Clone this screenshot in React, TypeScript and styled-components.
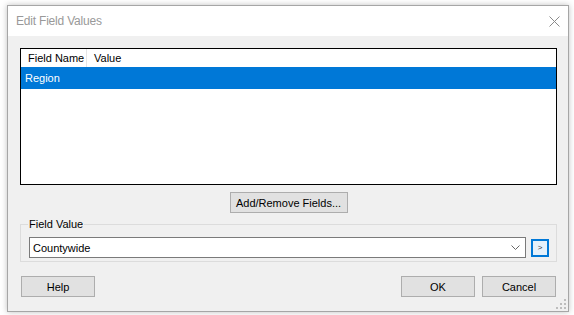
import React from 'react';
import styled, { createGlobalStyle } from 'styled-components';

const GlobalStyle = createGlobalStyle`
  html, body {
    margin: 0;
    padding: 0;
    background: #ffffff;
  }
  body {
    font-family: "Liberation Sans", Arial, sans-serif;
    font-size: 11px;
    color: #000;
  }
`;

const Page = styled.div`
  width: 574px;
  height: 315px;
  padding: 5px 5px 3px 7px;
  box-sizing: border-box;
`;

const Window = styled.div`
  width: 562px;
  height: 307px;
  box-sizing: border-box;
  border: 1px solid #a6a6a6;
  background: #f0f0f0;
  box-shadow: 0 0 6px rgba(0, 0, 0, 0.25);
  display: flex;
  flex-direction: column;
  position: relative;
`;

const TitleBar = styled.div`
  height: 30px;
  flex: none;
  background: #fff;
  display: flex;
  align-items: center;
  justify-content: space-between;
  padding: 0 8px 0 8px;
`;

const Title = styled.span`
  font-family: "Liberation Sans", Arial, sans-serif;
  font-size: 12px;
  color: #999999;
  letter-spacing: -0.2px;
`;

const CloseIcon = styled.svg`
  width: 11px;
  height: 11px;
`;

const Body = styled.div`
  flex: 1;
  display: flex;
  flex-direction: column;
  padding: 12px 11px 13px 12px;
`;

const List = styled.div`
  height: 137px;
  box-sizing: border-box;
  border: 1px solid #000;
  background: #fff;
  flex: none;
`;

const HeaderRow = styled.div`
  display: flex;
  height: 18px;
`;

const HeaderCell = styled.div<{ $w?: number }>`
  width: ${p => (p.$w ? `${p.$w}px` : 'auto')};
  flex: ${p => (p.$w ? 'none' : '1')};
  box-sizing: border-box;
  padding-left: 7px;
  line-height: 18px;
  border-right: ${p => (p.$w ? '1px solid #e5e5e5' : 'none')};
`;

const Row = styled.div<{ $selected?: boolean }>`
  height: 22px;
  line-height: 22px;
  padding-left: 4px;
  background: ${p => (p.$selected ? '#0078d7' : 'transparent')};
  color: ${p => (p.$selected ? '#fff' : '#000')};
`;

const Button = styled.button<{ $w: number }>`
  width: ${p => p.$w}px;
  height: 21px;
  box-sizing: border-box;
  border: 1px solid #adadad;
  background: #e1e1e1;
  font-family: "Liberation Sans", Arial, sans-serif;
  font-size: 11px;
  font-weight: 400;
  color: #000;
  padding: 0;
  flex: none;
`;

const CenterRow = styled.div`
  display: flex;
  justify-content: center;
  margin-top: 7px;
`;

const Group = styled.fieldset`
  margin: 5px 0 0 0;
  border: 1px solid #dcdcdc;
  padding: 6px 7px 3px 8px;
  display: flex;
  align-items: center;
  gap: 5px;
  min-width: 0;
`;

const Legend = styled.legend`
  padding: 0 1px;
  margin-left: -1px;
  line-height: 13px;
  font-size: 11px;
`;

const Combo = styled.div`
  flex: 1;
  height: 21px;
  box-sizing: border-box;
  border: 1px solid #7a7a7a;
  background: #fff;
  display: flex;
  align-items: center;
  justify-content: space-between;
  padding: 0 5px 0 3px;
`;

const Chevron = styled.svg`
  width: 9px;
  height: 5px;
`;

const ArrowButton = styled.button`
  width: 18px;
  height: 18px;
  box-sizing: border-box;
  border: 2px solid #0078d7;
  background: #e5f1fb;
  padding: 0;
  display: flex;
  align-items: center;
  justify-content: center;
  font-family: "Liberation Sans", Arial, sans-serif;
  font-size: 8px;
  color: #333;
  flex: none;
`;

const Footer = styled.div`
  display: flex;
  margin-top: 14px;
  padding: 0 1px;
  gap: 7px;
`;

const Spacer = styled.div`
  flex: 1;
`;

const Grip = styled.svg`
  position: absolute;
  right: 1px;
  bottom: 1px;
  width: 11px;
  height: 11px;
`;

export default function App() {
  return (
    <Page>
      <GlobalStyle />
      <Window>
        <TitleBar>
          <Title>Edit Field Values</Title>
          <CloseIcon viewBox="0 0 11 11">
            <path d="M0.5 0.5 L10.5 10.5 M10.5 0.5 L0.5 10.5" stroke="#8a8a8a" strokeWidth="1" fill="none" />
          </CloseIcon>
        </TitleBar>
        <Body>
          <List>
            <HeaderRow>
              <HeaderCell $w={66}>Field Name</HeaderCell>
              <HeaderCell>Value</HeaderCell>
            </HeaderRow>
            <Row $selected>Region</Row>
          </List>
          <CenterRow>
            <Button $w={118}>Add/Remove Fields...</Button>
          </CenterRow>
          <Group>
            <Legend>Field Value</Legend>
            <Combo>
              <span>Countywide</span>
              <Chevron viewBox="0 0 9 5">
                <path d="M0.5 0.5 L4.5 4.5 L8.5 0.5" stroke="#666" strokeWidth="1" fill="none" />
              </Chevron>
            </Combo>
            <ArrowButton>&gt;</ArrowButton>
          </Group>
          <Footer>
            <Button $w={74}>Help</Button>
            <Spacer />
            <Button $w={74}>OK</Button>
            <Button $w={74}>Cancel</Button>
          </Footer>
        </Body>
        <Grip viewBox="0 0 11 11">
          <rect x="8" y="0" width="2" height="2" fill="#bdbdbd" />
          <rect x="4" y="4" width="2" height="2" fill="#bdbdbd" />
          <rect x="8" y="4" width="2" height="2" fill="#bdbdbd" />
          <rect x="0" y="8" width="2" height="2" fill="#bdbdbd" />
          <rect x="4" y="8" width="2" height="2" fill="#bdbdbd" />
          <rect x="8" y="8" width="2" height="2" fill="#bdbdbd" />
        </Grip>
      </Window>
    </Page>
  );
}
